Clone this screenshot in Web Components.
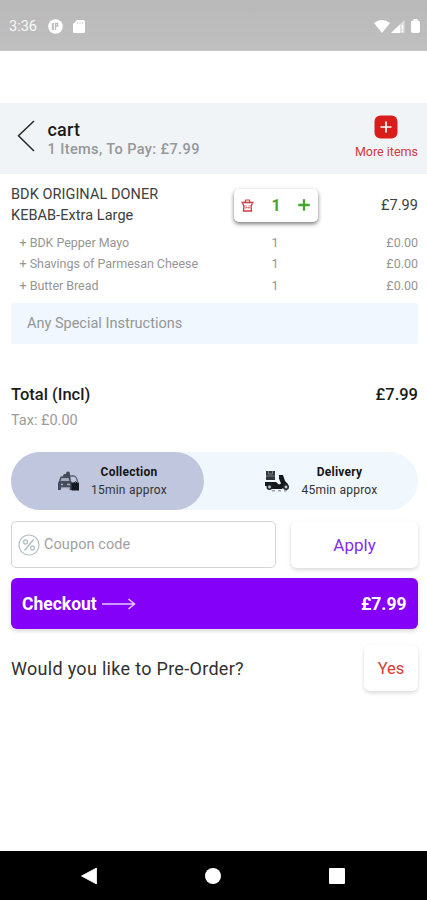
<!DOCTYPE html>
<html lang="en">
<head>
<meta charset="utf-8">
<title>Cart</title>
<style>
html,body{margin:0;padding:0}
body{width:427px;height:900px;overflow:hidden;background:#fff;font-family:Roboto,"Liberation Sans",sans-serif;color:#222}
</style>
</head>
<body>
<cart-app></cart-app>
<script>
function define(name, html) {
  const t = document.createElement('template');
  t.innerHTML = html;
  customElements.define(name, class extends HTMLElement {
    constructor() {
      super();
      this.attachShadow({ mode: 'open' }).appendChild(t.content.cloneNode(true));
    }
  });
}

define('status-bar', `
<style>
:host{display:flex;align-items:center;box-sizing:border-box;height:51px;padding:2px 7px 0 9px;background:linear-gradient(#b9b9b9,#bfbfbf);color:#f8f8f8;font-size:14.5px;border-bottom:1px solid #c4c4c4}
.l{display:flex;align-items:center;gap:11px;flex:1}
.r{display:flex;align-items:center}
svg{display:block}
</style>
<div class="l"><span>3:36</span>
<svg width="15" height="15" viewBox="0 0 15 15"><circle cx="7.5" cy="7.5" r="7.3" fill="#fff"/><path d="M4.800 4v7" stroke="#bdbdbd" stroke-width="2"/><path d="M7.500 11V4.500h2.200v2.500H7.500" fill="none" stroke="#bdbdbd" stroke-width="1.300"/></svg>
<svg width="12" height="13" viewBox="0 0 12 13" style="margin-left:-1px"><path d="M4 0h6.5Q12 0 12 1.500V11.500Q12 13 10.500 13H1.500Q0 13 0 11.500V4z" fill="#fff"/><path d="M4.700 2v2M7 2v2M9.300 2v2" stroke="#ccc" stroke-width=".8"/></svg></div>
<div class="r">
<svg width="16" height="13" viewBox="0 0 16 13"><path d="M0 3Q8-3 16 3L8 13z" fill="#fff"/></svg>
<svg width="14" height="13" viewBox="0 0 14 13" style="margin-left:1px"><path d="M13.500 0V13H0z" fill="#fff" opacity=".5"/><path d="M9 4.500V13H0z" fill="#fff"/><path d="M11.500 5v4M11.500 10.500V12" stroke="#fff" stroke-width="1.500"/></svg>
<svg width="9" height="14" viewBox="0 0 9 14" style="margin-left:6px"><path d="M2.500 0h4v1.500H7Q9 1.500 9 3.500V12Q9 14 7 14H2Q0 14 0 12V3.500Q0 1.500 2 1.500h.5z" fill="#fff"/></svg>
</div>`);

define('cart-header', `
<style>
:host{display:flex;box-sizing:border-box;height:71px;margin-top:51.500px;padding:0 9px 0 17px;background:#f1f4f6;align-items:flex-start}
.back{margin-top:17px}
.t{flex:1;margin:16px 0 0 12.500px}
h1{margin:0;font-size:18px;line-height:22px;font-weight:500;letter-spacing:.2px;color:#1c1c1c}
p{margin:0;font-size:14.500px;line-height:17px;font-weight:500;color:#94979b;letter-spacing:.4px}
.m{display:flex;flex-direction:column;align-items:center;margin-top:12px;font-size:12.500px;line-height:15px;color:#d3393c}
.m span{margin-top:5.500px}
svg{display:block}
</style>
<svg class="back" width="18" height="32" viewBox="0 0 18 32"><path d="M17 1 1.500 15.800 17 31" fill="none" stroke="#262626" stroke-width="1.500"/></svg>
<div class="t"><h1>cart</h1><p>1 Items, To Pay: £7.99</p></div>
<div class="m"><svg width="24" height="24" viewBox="0 0 24 24"><rect x=".5" y=".5" width="23" height="23" rx="6" fill="#d91d1b"/><path d="M12 6.500v11M6.500 12h11" stroke="#fff" stroke-width="1.700"/></svg><span>More items</span></div>`);

define('qty-stepper', `
<style>
:host{display:flex;box-sizing:border-box;width:84px;height:33px;border-radius:5px;background:#fff;box-shadow:0 2px 4px rgba(0,0,0,.52);align-items:center;justify-content:space-between;padding:0 8px 0 7px;color:#49a532;font-weight:700;font-size:16px}
svg{display:block}
</style>
<svg width="13" height="13" viewBox="0 0 13 13" fill="none" stroke="#cf3b46"><path d="M.5 3.500h12" stroke-width="1.600"/><path d="M1.500 4.500 3 7l-.5 5h8L10 7l1.500-2.500" stroke-width="1.400"/><path d="M4 3 4.700 1h3.600L9 3" stroke-width="1.200"/><path d="M5 6v4M8 6v4M4.500 8.500h4" stroke-width="1" opacity=".55"/></svg>
<span><slot></slot></span>
<svg width="12" height="12" viewBox="0 0 12 12"><path d="M6 .3v11.400M.3 6h11.400" stroke="#45a42f" stroke-width="2.300"/></svg>`);

define('cart-line', `
<style>
:host{display:grid;grid-template-columns:222px 84px 1fr;align-items:center;height:42px;margin-top:10px;font-size:14.500px;line-height:21px;color:#404040;letter-spacing:.05px}
.p{text-align:right}
</style>
<div><slot></slot></div><qty-stepper style="margin:1px 0 0 1px">1</qty-stepper><div class="p" style="padding-top:1px"><slot name="price"></slot></div>`);

define('option-line', `
<style>
:host{display:grid;grid-template-columns:222px 84px 1fr;height:21.300px;line-height:21.300px;font-size:12.500px;color:#969696}
.n{padding-left:8.500px;white-space:nowrap;letter-spacing:-.03px}.q{text-align:center}.p{text-align:right}
</style>
<div class="n">+ <slot></slot></div><div class="q">1</div><div class="p">£0.00</div>`);

define('order-mode', `
<style>
:host{display:flex;align-items:center;justify-content:center;box-sizing:border-box;height:58px;border-radius:29px;font-size:12px;line-height:18px;color:#333;text-align:center;gap:8px;letter-spacing:.24px}
:host([selected]){background:#c0c6dd}
b{display:block;font-weight:700;color:#161616}
.i{display:flex;width:26px}
</style>
<div class="i"><slot name="icon"></slot></div><div><b><slot></slot></b><slot name="time"></slot></div>`);

define('raised-button', `
<style>
:host{display:flex;align-items:center;justify-content:center;border-radius:6px;background:#fff;box-shadow:0 2px 4px rgba(0,0,0,.15)}
</style><slot></slot>`);

define('coupon-field', `
<style>
:host{display:flex;align-items:center;box-sizing:border-box;width:265px;height:47px;border:1.500px solid #d3d5d5;border-radius:5px;padding-left:6px;gap:4px;font-size:14.500px;color:#a0a0a0;letter-spacing:.08px}
</style>
<svg width="22" height="22" viewBox="0 0 22 22" fill="none" stroke="#b3c0c4"><circle cx="11" cy="11" r="10" stroke-width="1.200"/><path d="M15.500 5.500l-9 11" stroke-width="1.600"/><circle cx="7.500" cy="8" r="2" stroke-width="1.300"/><circle cx="14.500" cy="14" r="2" stroke-width="1.300"/></svg>
<span>Coupon code</span>`);

define('checkout-bar', `
<style>
:host{display:flex;align-items:center;box-sizing:border-box;height:51px;margin-top:10px;padding:0 11.500px 0 11px;border-radius:6px;background:#8400f8;box-shadow:0 2px 4px rgba(0,0,0,.16);color:#fff;font-weight:700;font-size:17.500px}
svg{margin-left:5px;flex:none}
.p{margin-left:auto}
</style>
<span>Checkout</span>
<svg width="34" height="14" viewBox="0 0 34 14" fill="none" stroke="#e6c9ff" stroke-width="1.500"><path d="M0 7h32.500M26.500 2l6 5-6 5"/></svg>
<span class="p">£7.99</span>`);

define('nav-bar', `
<style>
:host{display:flex;height:49px;background:#000;align-items:center;justify-content:space-between;padding:0 82px 0 81px;margin-top:auto}
svg{display:block}
</style>
<svg width="16" height="18" viewBox="0 0 16 18"><path d="M15.500 1v16L.5 9z" fill="#fff" stroke="#fff" stroke-linejoin="round" stroke-width=".8"/></svg>
<svg width="16" height="16" viewBox="0 0 16 16"><circle cx="8" cy="8" r="8" fill="#fff"/></svg>
<svg width="16" height="16" viewBox="0 0 16 16"><rect width="16" height="16" rx="1" fill="#fff"/></svg>`);

define('cart-app', `
<style>
:host{display:flex;flex-direction:column;width:427px;height:900px;background:#fff}
main{padding:0 9px 0 11px}
.opts{margin-top:6.500px}
.note{box-sizing:border-box;height:41px;line-height:41px;margin-top:7px;padding-left:16px;background:#f0f7fe;color:#939699;font-size:14.500px;letter-spacing:0;border-radius:2px}
.tot{display:flex;justify-content:space-between;margin-top:40.500px;line-height:22px;font-size:16.500px;font-weight:500;color:#1b1b1b}
.tax{margin-top:5px;line-height:20px;font-size:14.500px;color:#9b9b9b}
.modes{display:grid;grid-template-columns:193px 1fr;height:58px;margin-top:21px;border-radius:29px;background:#f0f7fd}
.cp{display:flex;justify-content:space-between;margin-top:11px}
.apply{width:127px;height:47px;color:#842df1;font-size:17px}
.pre{display:flex;align-items:center;justify-content:space-between;margin-top:16px;font-size:18px;letter-spacing:.3px;color:#303030}
.yes{width:54px;height:46px;color:#d23b36;font-size:16.500px;letter-spacing:0}
</style>
<status-bar></status-bar>
<cart-header></cart-header>
<main>
<cart-line>BDK ORIGINAL DONER<br>KEBAB-Extra Large<span slot="price">£7.99</span></cart-line>
<div class="opts">
<option-line>BDK Pepper Mayo</option-line>
<option-line>Shavings of Parmesan Cheese</option-line>
<option-line>Butter Bread</option-line>
</div>
<div class="note">Any Special Instructions</div>
<div class="tot"><span>Total (Incl)</span><span>£7.99</span></div>
<div class="tax">Tax: £0.00</div>
<div class="modes">
<order-mode selected style="padding-left:9px">
<svg slot="icon" width="23" height="21" viewBox="0 0 23 21"><path d="M2 10 3.500 5.500h2L7 3h6l1 7 1.500 2v7h-3v-2H4v2H1v-7z" fill="#454b5a"/><path d="M4.500 7h7l1 3h-9z" fill="#a4aabd"/><circle cx="11" cy="2.500" r="2" fill="#444957"/><path d="M4 13.500h2M10 13.500h3M4 17h9" stroke="#adb3c7" stroke-width="1.300"/><path d="M13 5h4q3 1 3.500 6" fill="none" stroke="#59606f" stroke-width="1.300"/><path d="M14.500 11.500h7.500v8h-7.500z" fill="#16191f"/><path d="M17 12q1.500-3 3 0" fill="none" stroke="#16191f"/></svg>
Collection<span slot="time">15min approx</span></order-mode>
<order-mode style="padding-left:20px;gap:11px">
<svg slot="icon" width="26" height="22" viewBox="0 0 26 22"><path d="M2 1h9v9H2z" fill="#30353a"/><path d="M4.500 1v3h4V1M2 6h9" fill="none" stroke="#8a9299" stroke-width=".8"/><path d="M1 12h11l3 2.500 2-1-2-5V5h4l2 6 3 3v2h-3l-3 3H8l-1-3H1z" fill="#15191d"/><circle cx="5.500" cy="17" r="2.200" fill="#c3cad0" stroke="#22272b" stroke-width="1.600"/><circle cx="22" cy="17" r="2.200" fill="#c3cad0" stroke="#22272b" stroke-width="1.600"/><path d="M8 20.800h3M14 20.800h3M20 20.800h3" stroke="#777" stroke-width="1"/></svg>
Delivery<span slot="time">45min approx</span></order-mode>
</div>
<div class="cp"><coupon-field></coupon-field><raised-button class="apply">Apply</raised-button></div>
<checkout-bar></checkout-bar>
<div class="pre"><span>Would you like to Pre-Order?</span><raised-button class="yes">Yes</raised-button></div>
</main>
<nav-bar></nav-bar>`);
</script>
</body>
</html>
